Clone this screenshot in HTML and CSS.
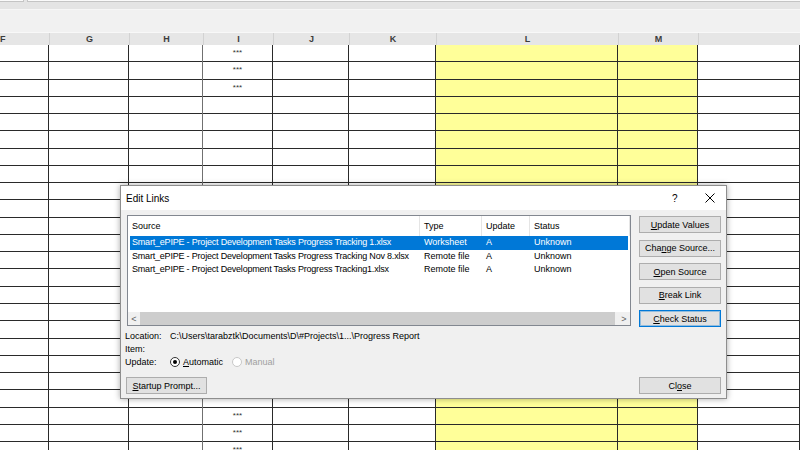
FILE: index.html
```html
<!DOCTYPE html>
<html>
<head>
  <title>Edit Links</title>
  <link rel="stylesheet" href="styles.css">
</head>
<body>
  <div class="topbar">
    <div class="namebox"></div>
    <div class="formula"></div>
  </div>
  <div class="ribbon"></div>

  <div class="colheads">
    <div class="colhead">F</div>
    <div class="colhead">G</div>
    <div class="colhead">H</div>
    <div class="colhead">I</div>
    <div class="colhead">J</div>
    <div class="colhead">K</div>
    <div class="colhead">L</div>
    <div class="colhead">M</div>
    <div class="colhead"></div>
  </div>

  <div class="sheet" id="sheet"></div>

  <div class="dialog">
    <div class="dlg-title">
      <span class="dlg-name">Edit Links</span>
      <span class="dlg-help">?</span>
      <span class="dlg-close">
        <svg width="10" height="10" viewBox="0 0 10 10"><path d="M0.5 0.5 L9.5 9.5 M9.5 0.5 L0.5 9.5" stroke="#000" stroke-width="1"/></svg>
      </span>
    </div>

    <div class="dlg-body">
      <div class="dlg-main">
        <div class="links">
          <div class="links-head">
            <div class="c-src">Source</div>
            <div class="c-type">Type</div>
            <div class="c-upd">Update</div>
            <div class="c-stat">Status</div>
          </div>
          <div class="links-rows">
            <div class="link-row selected">
              <div class="c-src">Smart_ePIPE - Project Development Tasks Progress Tracking 1.xlsx</div>
              <div class="c-type">Worksheet</div>
              <div class="c-upd">A</div>
              <div class="c-stat">Unknown</div>
            </div>
            <div class="link-row">
              <div class="c-src">Smart_ePIPE - Project Development Tasks Progress Tracking Nov 8.xlsx</div>
              <div class="c-type">Remote file</div>
              <div class="c-upd">A</div>
              <div class="c-stat">Unknown</div>
            </div>
            <div class="link-row">
              <div class="c-src">Smart_ePIPE - Project Development Tasks Progress Tracking1.xlsx</div>
              <div class="c-type">Remote file</div>
              <div class="c-upd">A</div>
              <div class="c-stat">Unknown</div>
            </div>
          </div>
          <div class="hscroll">
            <span class="arrow">&lt;</span>
            <div class="thumb"></div>
            <span class="arrow">&gt;</span>
          </div>
        </div>

        <div class="side-buttons">
          <button class="btn"><u>U</u>pdate Values</button>
          <button class="btn">Cha<u>n</u>ge Source...</button>
          <button class="btn"><u>O</u>pen Source</button>
          <button class="btn"><u>B</u>reak Link</button>
          <button class="btn focused"><u>C</u>heck Status</button>
        </div>
      </div>

      <div class="info">
        <div class="info-line"><span class="info-label">Location:</span><span>C:\Users\tarabztk\Documents\D\#Projects\1...\Progress Report</span></div>
        <div class="info-line"><span class="info-label">Item:</span></div>
        <div class="info-line">
          <span class="info-label">Update:</span>
          <span class="radio checked"></span><span class="radio-text"><u>A</u>utomatic</span>
          <span class="radio disabled"></span><span class="radio-text disabled">Manual</span>
        </div>
      </div>

      <div class="dlg-foot">
        <button class="btn"><u>S</u>tartup Prompt...</button>
        <button class="btn">Cl<u>o</u>se</button>
      </div>
    </div>
  </div>

  <script>
    var sheet = document.getElementById("sheet");
    var stars = [1, 2, 3, 22, 23, 24];
    for (var r = 1; r <= 24; r++) {
      for (var c = 0; c < 9; c++) {
        var cell = document.createElement("div");
        cell.className = "cell";
        if (c == 3) cell.classList.add("col-i");
        if (c == 6 || c == 7) cell.classList.add("yellow");
        if (c == 3 && stars.indexOf(r) >= 0) cell.textContent = "***";
        sheet.appendChild(cell);
      }
    }
  </script>
</body>
</html>
```

FILE: styles.css
```css
body {
  margin: 0;
  width: 800px;
  height: 450px;
  overflow: hidden;
  position: relative;
  background-color: #ffffff;
  font-family: "Liberation Sans", Arial, sans-serif;
}

.topbar {
  display: flex;
  gap: 3px;
  height: 10px;
  background-color: #e4e4e4;
  border-bottom: 1px solid #f6f6f6;
  box-sizing: border-box;
}

.namebox,
.formula {
  height: 1px;
  background-color: #fafafa;
  border-bottom: 1px solid #c4c4c4;
}

.namebox {
  width: 23px;
  border-right: 1px solid #c4c4c4;
}

.formula {
  flex: 1;
  border-left: 1px solid #c4c4c4;
}

.ribbon {
  height: 22px;
  background-color: #f1f1f1;
}

.colheads,
.sheet {
  display: grid;
  grid-template-columns: 49px 80px 74px 70px 76px 87px 182px 80px 102px;
}

.colheads {
  height: 13px;
  background-color: #e6e6e6;
  border-top: 1px solid #f8f8f8;
  box-sizing: border-box;
}

.colhead {
  border-left: 1px solid #d2d2d2;
  font-size: 9px;
  font-weight: bold;
  color: #3c3c3c;
  text-align: center;
  line-height: 12px;
}

.colhead:first-child {
  border-left: none;
  text-align: left;
}

.sheet {
  grid-auto-rows: 17.27px;
}

.cell {
  border-right: 1px solid #2a2a2a;
  border-bottom: 1px solid #2a2a2a;
  font-size: 8px;
  color: #333;
  text-align: center;
  line-height: 16px;
}

.cell.col-i {
  box-shadow: -1px 0 0 #707070;
}

.cell.yellow {
  background-color: #ffff99;
}

/* dialog */

.dialog {
  position: absolute;
  left: 120px;
  top: 185px;
  width: 607px;
  height: 214px;
  box-sizing: border-box;
  background-color: #f0f0f0;
  border: 1px solid #8e8e8e;
  box-shadow: 0 0 6px rgba(0, 0, 0, 0.35);
  font-size: 9px;
  color: #000;
}

.dlg-title {
  display: flex;
  align-items: center;
  height: 24px;
  background-color: #ffffff;
  padding-left: 5px;
}

.dlg-name {
  flex: 1;
  font-size: 10px;
}

.dlg-help {
  width: 14px;
  font-size: 10px;
  margin-right: 19px;
}

.dlg-close {
  width: 21px;
  display: flex;
}

.dlg-body {
  padding: 5px 5px 0 6px;
}

.dlg-main {
  display: flex;
  gap: 8px;
}

.links {
  width: 504px;
  height: 111px;
  box-sizing: border-box;
  border: 1px solid #828790;
  background-color: #ffffff;
  display: flex;
  flex-direction: column;
}

.links-head,
.link-row {
  display: flex;
}

.links-head {
  height: 20px;
  align-items: center;
}

.links-head > div {
  border-right: 1px solid #e5e5e5;
  height: 100%;
  line-height: 21px;
}

.links-rows {
  flex: 1;
}

.link-row {
  height: 13.5px;
  line-height: 13.5px;
  margin-left: 2px;
  margin-right: 2px;
  white-space: nowrap;
}

.link-row .c-src {
  letter-spacing: -0.2px;
}

.link-row.selected {
  background-color: #0078d7;
  color: #ffffff;
}

.c-src {
  width: 292px;
  padding-left: 4px;
  box-sizing: border-box;
}

.link-row .c-src {
  width: 290px;
  padding-left: 2px;
}

.c-type {
  width: 62px;
  padding-left: 4px;
  box-sizing: border-box;
}

.c-upd {
  width: 48px;
  padding-left: 4px;
  box-sizing: border-box;
}

.c-stat {
  flex: 1;
  padding-left: 4px;
}

.hscroll {
  height: 13px;
  display: flex;
  align-items: center;
  background-color: #f0f0f0;
  color: #606060;
  font-size: 9px;
}

.arrow {
  width: 12px;
  text-align: center;
}

.thumb {
  flex: 1;
  height: 13px;
  background-color: #cdcdcd;
  margin-right: 3px;
}

.side-buttons {
  display: flex;
  flex-direction: column;
  gap: 6.5px;
  padding-top: 1px;
}

.btn {
  width: 82px;
  height: 17px;
  padding: 0;
  box-sizing: border-box;
  background-color: #e1e1e1;
  border: 1px solid #adadad;
  font-family: "Liberation Sans", Arial, sans-serif;
  font-size: 9px;
  color: #000;
}

.btn.focused {
  border-color: #0078d7;
  box-shadow: inset 0 0 0 1px rgba(0, 120, 215, 0.35);
}

.info {
  margin-top: 2px;
  margin-left: -2px;
}

.info-line {
  display: flex;
  align-items: center;
  height: 13px;
  white-space: nowrap;
}

.info-label {
  width: 45px;
}

.radio {
  width: 10px;
  height: 10px;
  box-sizing: border-box;
  border-radius: 50%;
  border: 1px solid #333;
  background-color: #fff;
  position: relative;
  margin-right: 3px;
}

.radio.checked::after {
  content: "";
  position: absolute;
  left: 2px;
  top: 2px;
  width: 4px;
  height: 4px;
  border-radius: 50%;
  background-color: #000;
}

.radio.disabled {
  border-color: #c8c8c8;
  margin-left: 9px;
}

.radio-text.disabled {
  color: #a0a0a0;
}

.dlg-foot {
  display: flex;
  justify-content: space-between;
  margin-top: 9px;
}

.dlg-foot .btn:first-child {
  width: 81px;
  margin-left: -1px;
}
```
